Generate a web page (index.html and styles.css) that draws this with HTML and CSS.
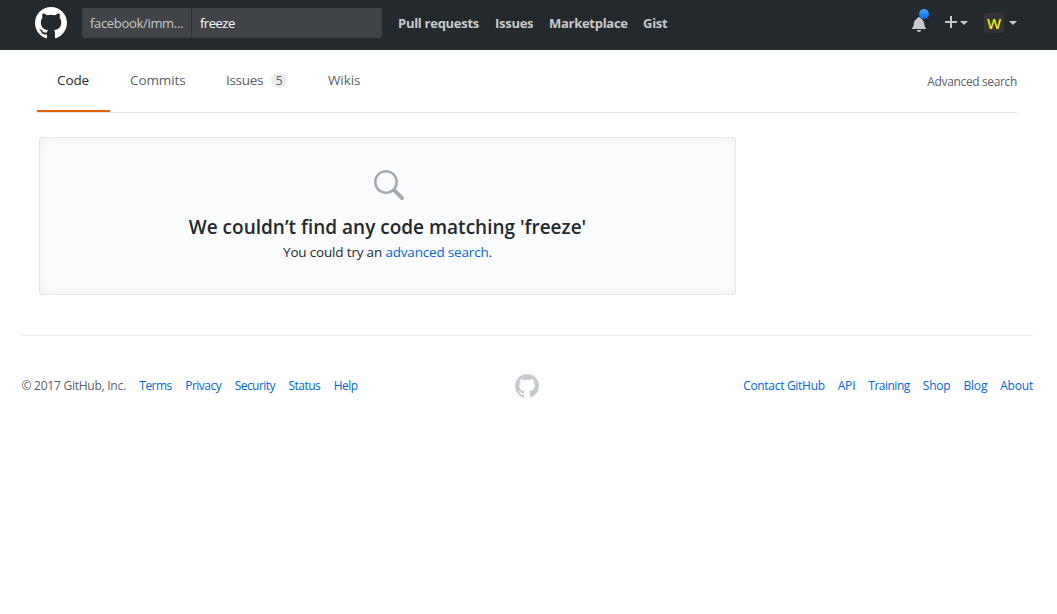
FILE: index.html
```
<!DOCTYPE html>
<html lang="en">
<head>
<meta charset="utf-8">
<title>Search · freeze</title>
<link rel="stylesheet" href="styles.css">
</head>
<body>
<svg class="sprite" aria-hidden="true">
  <symbol id="mark" viewBox="0 0 16 16"><path fill-rule="evenodd" d="M8 0C3.58 0 0 3.58 0 8c0 3.54 2.29 6.53 5.47 7.59.4.07.55-.17.55-.38 0-.19-.01-.82-.01-1.49-2.01.37-2.53-.49-2.69-.94-.09-.23-.48-.94-.82-1.13-.28-.15-.68-.52-.01-.53.63-.01 1.08.58 1.23.82.72 1.21 1.87.87 2.33.66.07-.52.28-.87.51-1.07-1.78-.2-3.64-.89-3.64-3.95 0-.87.31-1.59.82-2.15-.08-.2-.36-1.02.08-2.12 0 0 .67-.21 2.2.82.64-.18 1.32-.27 2-.27.68 0 1.36.09 2 .27 1.53-1.04 2.2-.82 2.2-.82.44 1.1.16 1.92.08 2.12.51.56.82 1.27.82 2.15 0 3.07-1.87 3.75-3.65 3.95.29.25.54.73.54 1.48 0 1.07-.01 1.93-.01 2.2 0 .21.15.46.55.38A8.013 8.013 0 0 0 16 8c0-4.42-3.58-8-8-8z"/></symbol>
</svg>
<header class="header">
  <svg class="logo"><use href="#mark"/></svg>
  <form class="search">
    <span class="scope">facebook/imm...</span>
    <span class="query">freeze</span>
  </form>
  <nav class="nav">
    <a class="nav-pulls">Pull requests</a><a class="nav-issues">Issues</a><a class="nav-market">Marketplace</a><a>Gist</a>
  </nav>
  <div class="user">
    <span class="bell">
      <svg width="14" height="16" viewBox="0 0 14 16"><path d="M14 12v1H0v-1l.73-.58c.77-.77.81-2.55 1.19-4.42C2.69 3.23 6 2 6 2c0-.55.45-1 1-1s1 .45 1 1c0 0 3.39 1.23 4.16 5 .38 1.88.42 3.66 1.19 4.42l.66.58H14zm-7 4c1.11 0 2-.89 2-2H5c0 1.11.89 2 2 2z"/></svg>
      <i class="dot"></i>
    </span>
    <svg class="plus" width="12" height="16" viewBox="0 0 12 16"><path d="M12 9H7v5H5V9H0V7h5V2h2v5h5z"/></svg>
    <i class="caret"></i>
    <span class="avatar">W</span>
    <i class="caret caret-user"></i>
  </div>
</header>
<div class="tabs">
  <a class="tab active">Code</a>
  <a class="tab tab-commits">Commits</a>
  <a class="tab tab-issues">Issues<span class="counter">5</span></a>
  <a class="tab">Wikis</a>
  <a class="advanced">Advanced search</a>
</div>
<main class="blankslate">
  <svg class="glass" width="32" height="32" viewBox="0 0 16 16"><path fill-rule="evenodd" d="M15.7 13.3l-3.81-3.83A5.93 5.93 0 0 0 13 6c0-3.31-2.69-6-6-6S1 2.69 1 6s2.69 6 6 6c1.3 0 2.48-.41 3.47-1.11l3.83 3.81c.19.2.45.3.7.3.25 0 .52-.09.7-.3a.996.996 0 0 0 0-1.41v.01zM7 10.7c-2.59 0-4.7-2.11-4.7-4.7 0-2.59 2.11-4.7 4.7-4.7 2.59 0 4.7 2.11 4.7 4.7 0 2.59-2.11 4.7-4.7 4.7z"/></svg>
  <h3>We couldn’t find any code matching 'freeze'</h3>
  <p>You could try an <a>advanced search</a>.</p>
</main>
<footer class="footer">
  <div class="links links-left"><span>© 2017 GitHub, Inc.</span><a>Terms</a><a>Privacy</a><a>Security</a><a>Status</a><a>Help</a></div>
  <svg class="foot-mark"><use href="#mark"/></svg>
  <div class="links links-right"><a class="contact">Contact GitHub</a><a>API</a><a class="training">Training</a><a>Shop</a><a>Blog</a><a>About</a></div>
</footer>
</body>
</html>
```
FILE: styles.css
```
* { box-sizing: border-box; }
body { margin: 0; background: #fff; color: #24292e; font: 14px/21px "Open Sans", "Noto Sans", sans-serif; white-space: nowrap; }
.sprite { display: none; }
svg { display: block; flex: none; }
.header { display: flex; align-items: flex-start; height: 50px; padding: 7px 40px 0 35px; background: #24292e; color: #c8c9cb; }
.logo { width: 32px; height: 32px; fill: #fff; }
.search { display: flex; width: 300px; height: 30px; margin: 1px 0 0 15px; border-radius: 3px; background: #404448; font-size: 13px; line-height: 30px; }
.scope { width: 110px; padding-left: 8px; border-right: 1px solid #2b3035; letter-spacing: -.32px; }
.query { padding-left: 8px; color: #fff; letter-spacing: -.5px; }
.nav { display: flex; margin: 6px 0 0 16px; font-size: 13px; font-weight: 700; line-height: 20px; letter-spacing: -.28px; }
.nav-pulls { width: 97px; }
.nav-issues { width: 54px; }
.nav-market { width: 94px; }
.user { display: flex; margin-left: auto; }
.user svg { fill: #c8c9cb; }
.bell { position: relative; width: 14px; margin: 9px 19px 0 0; }
.dot { position: absolute; left: 7px; top: -7px; width: 10px; height: 10px; border-radius: 50%; background: linear-gradient(#54a3ff, #006eed); }
.plus { margin-top: 7px; }
.caret { width: 8px; height: 4px; margin: 14px 16px 0 3px; border: 4px solid transparent; border-top-color: #c8c9cb; border-bottom: 0; }
.avatar { width: 20px; height: 20px; margin-top: 6px; border-radius: 3px; background: #333; color: #eeee10; font: 600 15px/21px "Open Sans", sans-serif; text-align: center; }
.caret-user { margin: 14px 0 0 5px; }
.tabs { display: flex; height: 63px; margin: 0 40px 0 37px; border-bottom: 1px solid #e1e4e8; }
.tab { height: 62px; padding: 20px 0 0 20px; color: #586069; font-size: 13.5px; letter-spacing: -.1px; }
.active { width: 73px; border-bottom: 2px solid #e36209; color: #24292e; }
.tab-commits { width: 96px; }
.tab-issues { display: flex; width: 102px; letter-spacing: -.3px; }
.counter { width: 16px; height: 16px; margin: 2px 0 0 8px; border-radius: 8px; background: #ececed; font-size: 12px; line-height: 17px; text-align: center; }
.advanced { margin-left: auto; padding-top: 21px; color: #586069; font-size: 12px; letter-spacing: -.36px; }
.blankslate { width: 697px; height: 158px; margin: 24px 0 0 39px; padding-top: 32px; border: 1px solid #e1e4e8; border-radius: 3px; background: #fafbfc; box-shadow: inset 0 0 10px rgba(27,31,35,.05); text-align: center; }
.glass { margin: 0 auto; fill: #a3aab1; }
h3 { margin: 10px 0 0; font-size: 19px; font-weight: 600; line-height: 30px; }
p { margin: 0; font-size: 13.5px; letter-spacing: -.18px; }
p a, .links a { color: #0366d6; }
.footer { display: grid; grid-template-columns: 1fr 24px 1fr; height: 80px; margin: 40px 24px 0 21px; padding-top: 38px; border-top: 1px solid #eaecef; font-size: 12px; }
.links { display: flex; gap: 13px; padding-top: 1px; color: #586069; }
.links-left { gap: 13.5px; letter-spacing: -.53px; padding-left: .5px; }
.links-left span { letter-spacing: -.25px; }
.links-right { justify-content: flex-end; letter-spacing: -.2px; }
.contact { letter-spacing: -.3px; }
.training { letter-spacing: -.5px; }
.foot-mark { width: 24px; height: 24px; fill: #c6cbd1; }
```
